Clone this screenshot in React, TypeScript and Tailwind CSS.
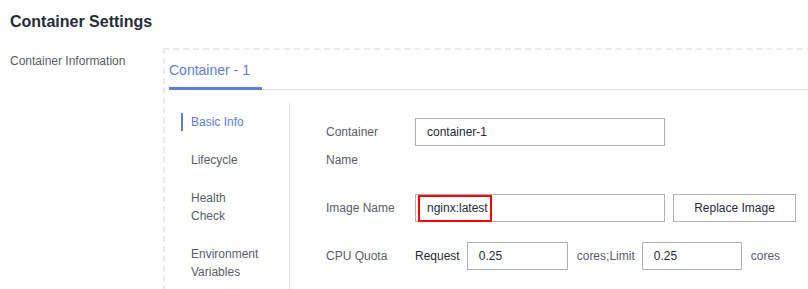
import React from "react";

export default function App() {
  const font = { fontFamily: '"Liberation Sans", Arial, sans-serif' };
  return (
    <div
      className="w-[808px] h-[289px] overflow-hidden bg-white text-[12px] text-[#575d6c]"
      style={font}
    >
      <div className="pt-[10px] pl-[10px] text-[16px] leading-[24px] font-bold text-[#252b3a]">
        Container Settings
      </div>
      <div className="flex mt-[14px]">
        <div className="w-[163px] shrink-0 pl-[10px] pt-[4px] leading-[18px]">
          Container Information
        </div>
        <div className="w-[700px] shrink-0 border-t-2 border-l-2 border-dashed border-[#ebebeb] pl-[4px] pt-[10px] pb-[40px]">
          <div className="flex border-b border-[#dfe1e6]">
            <div className="w-[93px] pb-[7px] border-b-[3px] border-[#5e7ce0] text-[14px] leading-[20px] text-[#5e7ce0] -mb-px">
              Container - 1
            </div>
          </div>
          <div className="flex mt-[13px]">
            <div className="w-[121px] shrink-0 border-r border-[#dfe1e6] pt-[10px] pl-[12px] pb-[20px] flex flex-col gap-[20px] leading-[18px]">
              <div className="border-l-2 border-[#5e7ce0] pl-[8px] text-[#5e7ce0]">Basic Info</div>
              <div className="border-l-2 border-transparent pl-[8px]">Lifecycle</div>
              <div className="border-l-2 border-transparent pl-[8px]">
                Health
                <br />
                Check
              </div>
              <div className="border-l-2 border-transparent pl-[8px]">
                Environment
                <br />
                Variables
              </div>
            </div>
            <div className="pl-[36px] pt-[15px] flex flex-col gap-[20px]">
              <div className="flex items-start">
                <div className="w-[89px] shrink-0 leading-[28px] pr-[10px]">Container Name</div>
                <div className="w-[250px] h-[28px] border border-[#adb0b8] pl-[11px] flex items-center text-[#252b3a]">
                  container-1
                </div>
              </div>
              <div className="flex items-start">
                <div className="w-[89px] shrink-0 leading-[28px]">Image Name</div>
                <div className="relative w-[250px] h-[28px] border border-[#adb0b8] pl-[11px] flex items-center text-[#252b3a]">
                  nginx:latest
                  <div className="absolute left-[2px] top-0 w-[74px] h-[27px] border-2 border-[#ff0000]" />
                </div>
                <div className="ml-[8px] w-[123px] h-[28px] border border-[#adb0b8] flex items-center justify-center text-[#252b3a]">
                  Replace Image
                </div>
              </div>
              <div className="flex items-center">
                <div className="w-[89px] shrink-0 leading-[28px]">CPU Quota</div>
                <span className="text-[#252b3a]">Request</span>
                <div className="ml-[7px] w-[101px] h-[28px] border border-[#adb0b8] pl-[11px] flex items-center text-[#252b3a]">
                  0.25
                </div>
                <span className="ml-[9px] text-[#575d6c]">cores;Limit</span>
                <div className="ml-[7px] w-[100px] h-[28px] border border-[#adb0b8] pl-[11px] flex items-center text-[#252b3a]">
                  0.25
                </div>
                <span className="ml-[9px] text-[#575d6c]">cores</span>
              </div>
            </div>
          </div>
        </div>
      </div>
    </div>
  );
}
